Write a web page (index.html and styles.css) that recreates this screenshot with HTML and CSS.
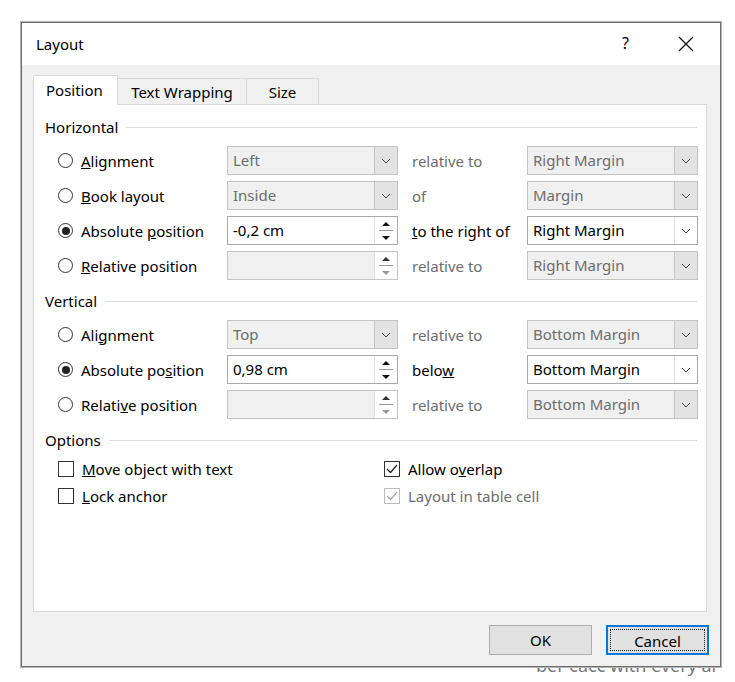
FILE: index.html
```html
<!DOCTYPE html>
<html lang="en">
<head>
  <meta charset="UTF-8" />
  <title>Layout</title>
  <link rel="stylesheet" href="styles.css">
</head>
<body>
  <div class="dialog">
    <div class="titlebar">
      <span class="title">Layout</span>
      <span class="help">?</span>
      <svg class="close" width="16" height="16" viewBox="0 0 16 16"><path d="M1 1L15 15M15 1L1 15" stroke="#111" stroke-width="1.3" fill="none"/></svg>
    </div>

    <div class="body">
      <div class="tabs">
        <div class="tab active">Position</div>
        <div class="tab">Text Wrapping</div>
        <div class="tab">Size</div>
      </div>

      <div class="panel">
        <div class="section-head"><span>Horizontal</span></div>
        <div class="grid">
          <label class="opt"><span class="radio"></span><span><u>A</u>lignment</span></label>
          <div class="combo disabled"><span>Left</span><span class="drop"><svg width="10" height="6" viewBox="0 0 10 6"><path d="M1 1L5 5L9 1" stroke="#444" fill="none"/></svg></span></div>
          <span class="mid dim">relative to</span>
          <div class="combo disabled"><span>Right Margin</span><span class="drop"><svg width="10" height="6" viewBox="0 0 10 6"><path d="M1 1L5 5L9 1" stroke="#444" fill="none"/></svg></span></div>

          <label class="opt"><span class="radio"></span><span><u>B</u>ook layout</span></label>
          <div class="combo disabled"><span>Inside</span><span class="drop"><svg width="10" height="6" viewBox="0 0 10 6"><path d="M1 1L5 5L9 1" stroke="#444" fill="none"/></svg></span></div>
          <span class="mid dim">of</span>
          <div class="combo disabled"><span>Margin</span><span class="drop"><svg width="10" height="6" viewBox="0 0 10 6"><path d="M1 1L5 5L9 1" stroke="#444" fill="none"/></svg></span></div>

          <label class="opt"><span class="radio on"></span><span>Absolute <u>p</u>osition</span></label>
          <div class="spin"><span>-0,2 cm</span><span class="arrows"><i class="up"></i><i class="down"></i></span></div>
          <span class="mid"><u>t</u>o the right of</span>
          <div class="combo"><span>Right Margin</span><span class="drop"><svg width="10" height="6" viewBox="0 0 10 6"><path d="M1 1L5 5L9 1" stroke="#444" fill="none"/></svg></span></div>

          <label class="opt"><span class="radio"></span><span><u>R</u>elative position</span></label>
          <div class="spin disabled"><span></span><span class="arrows"><i class="up"></i><i class="down"></i></span></div>
          <span class="mid dim">relative to</span>
          <div class="combo disabled"><span>Right Margin</span><span class="drop"><svg width="10" height="6" viewBox="0 0 10 6"><path d="M1 1L5 5L9 1" stroke="#444" fill="none"/></svg></span></div>
        </div>

        <div class="section-head"><span>Vertical</span></div>
        <div class="grid">
          <label class="opt"><span class="radio"></span><span>Ali<u>g</u>nment</span></label>
          <div class="combo disabled"><span>Top</span><span class="drop"><svg width="10" height="6" viewBox="0 0 10 6"><path d="M1 1L5 5L9 1" stroke="#444" fill="none"/></svg></span></div>
          <span class="mid dim">relative to</span>
          <div class="combo disabled"><span>Bottom Margin</span><span class="drop"><svg width="10" height="6" viewBox="0 0 10 6"><path d="M1 1L5 5L9 1" stroke="#444" fill="none"/></svg></span></div>

          <label class="opt"><span class="radio on"></span><span>Absolute po<u>s</u>ition</span></label>
          <div class="spin"><span>0,98 cm</span><span class="arrows"><i class="up"></i><i class="down"></i></span></div>
          <span class="mid">belo<u>w</u></span>
          <div class="combo"><span>Bottom Margin</span><span class="drop"><svg width="10" height="6" viewBox="0 0 10 6"><path d="M1 1L5 5L9 1" stroke="#444" fill="none"/></svg></span></div>

          <label class="opt"><span class="radio"></span><span>Relati<u>v</u>e position</span></label>
          <div class="spin disabled"><span></span><span class="arrows"><i class="up"></i><i class="down"></i></span></div>
          <span class="mid dim">relative to</span>
          <div class="combo disabled"><span>Bottom Margin</span><span class="drop"><svg width="10" height="6" viewBox="0 0 10 6"><path d="M1 1L5 5L9 1" stroke="#444" fill="none"/></svg></span></div>
        </div>

        <div class="section-head"><span>Options</span></div>
        <div class="checks">
          <label class="chk"><span class="box"></span><span><u>M</u>ove object with text</span></label>
          <label class="chk"><span class="box"><svg width="14" height="14" viewBox="0 0 14 14"><path d="M2 7L5.5 10.5L12 3" stroke="#222" stroke-width="1.2" fill="none"/></svg></span><span>Allow o<u>v</u>erlap</span></label>
          <label class="chk"><span class="box"></span><span><u>L</u>ock anchor</span></label>
          <label class="chk dim"><span class="box"><svg width="14" height="14" viewBox="0 0 14 14"><path d="M2 7L5.5 10.5L12 3" stroke="#aaa" stroke-width="1.2" fill="none"/></svg></span><span>Layout in table cell</span></label>
        </div>
      </div>

      <div class="buttons">
        <button class="btn">OK</button>
        <button class="btn focus"><span>Cancel</span></button>
      </div>
    </div>
  </div>
  <div class="behind">ber cacc with every ar</div>
</body>
</html>
```

FILE: styles.css
```css
body {
  margin: 0;
  background: #fff;
  font-family: "Noto Sans", "Open Sans", sans-serif;
  font-size: 15px;
  color: #000;
}

.dialog {
  position: relative;
  z-index: 1;
  margin: 22px 0 0 21px;
  width: 698px;
  height: 643px;
  border: 1px solid #6e6e6e;
  box-shadow: 0 0 0 1px #b4b4b4;
  background: #f0f0f0;
}

.titlebar {
  height: 42px;
  background: #fff;
  display: flex;
  align-items: center;
  padding-left: 14px;
}

.title {
  font-size: 15px;
  flex: 1;
}

.help {
  font-size: 16px;
  margin-right: 49px;
  margin-top: -2px;
}

.close {
  margin-right: 26px;
}

.body {
  padding: 10px 13px 0 11px;
}

.tabs {
  display: flex;
  align-items: flex-end;
  height: 29px;
}

.tab {
  height: 26px;
  line-height: 26px;
  padding: 0 12px;
  border: 1px solid #d9d9d9;
  border-bottom: none;
  border-left: none;
  background: #f0f0f0;
  font-size: 15px;
  box-sizing: border-box;
}

.tab:nth-child(2) {
  width: 129px;
  padding: 0;
  text-align: center;
}

.tab:nth-child(3) {
  width: 72px;
  text-align: center;
}

.tab.active {
  height: 30px;
  line-height: 28px;
  width: 85px;
  background: #fff;
  border-left: 1px solid #d9d9d9;
  margin-bottom: -1px;
  position: relative;
  z-index: 1;
}

.panel {
  height: 508px;
  background: #fff;
  border: 1px solid #d9d9d9;
  padding: 12px 9px 0 11px;
  box-sizing: border-box;
}

.section-head {
  display: flex;
  align-items: center;
  height: 20px;
  font-size: 15px;
}

.section-head::after {
  content: "";
  flex: 1;
  height: 1px;
  background: #dcdcdc;
  margin-left: 8px;
}

.grid {
  display: grid;
  grid-template-columns: 169px 171px 129px 171px;
  grid-auto-rows: 29px;
  row-gap: 6px;
  margin: 9px 0 11px 13px;
  align-items: center;
}

.opt,
.chk {
  display: flex;
  align-items: center;
  gap: 8px;
}

.radio {
  width: 13px;
  height: 13px;
  border: 1px solid #333;
  border-radius: 50%;
  display: flex;
  align-items: center;
  justify-content: center;
}

.radio.on::after {
  content: "";
  width: 8px;
  height: 8px;
  border-radius: 50%;
  background: #222;
}

.mid {
  padding-left: 14px;
}

.dim {
  color: #6d6d6d;
}

.combo,
.spin {
  height: 29px;
  box-sizing: border-box;
  border: 1px solid #a8a8a8;
  background: #fff;
  display: flex;
  align-items: stretch;
}

.combo > span:first-child,
.spin > span:first-child {
  flex: 1;
  padding-left: 5px;
  line-height: 27px;
}

.drop {
  width: 22px;
  border-left: 1px solid #e0e0e0;
  display: flex;
  align-items: center;
  justify-content: center;
}

.combo.disabled {
  background: #f0f0f0;
  border-color: #c4c4c4;
  color: #6d6d6d;
}

.combo.disabled .drop {
  background: #e3e3e3;
  border: 1px solid #c4c4c4;
  margin: -1px -1px -1px 0;
}

.spin.disabled {
  background: #f0f0f0;
  border-color: #c4c4c4;
}

.arrows {
  width: 22px;
  display: flex;
  flex-direction: column;
  border-left: 1px solid #e0e0e0;
}

.spin.disabled .arrows {
  background: #fff;
}

.arrows i {
  flex: 1;
  display: flex;
  align-items: center;
  justify-content: center;
}

.arrows .up {
  border-bottom: 1px solid #9a9a9a;
  margin: 0 4px;
}

.arrows .up::after {
  content: "";
  border: 4px solid transparent;
  border-bottom: 4px solid #111;
  border-top: none;
}

.arrows .down::after {
  content: "";
  border: 4px solid transparent;
  border-top: 4px solid #111;
  border-bottom: none;
}

.spin.disabled .up::after {
  border-bottom-color: #333;
}

.spin.disabled .down::after {
  border-top-color: #9a9a9a;
}

.checks {
  display: grid;
  grid-template-columns: 326px 260px;
  grid-auto-rows: 20px;
  row-gap: 7px;
  margin: 9px 0 0 13px;
}

.box {
  width: 16px;
  height: 16px;
  box-sizing: border-box;
  border: 1px solid #333;
  display: flex;
  align-items: center;
  justify-content: center;
}

.chk.dim .box {
  border-color: #bcbcbc;
}

.buttons {
  display: flex;
  justify-content: flex-end;
  gap: 14px;
  margin-top: 13px;
  margin-right: -2px;
}

.btn {
  width: 103px;
  height: 30px;
  font-family: "Noto Sans", "Open Sans", sans-serif;
  font-size: 15px;
  background: #e1e1e1;
  border: 1px solid #adadad;
  padding: 0;
  color: #000;
}

.btn.focus {
  border: 2px solid #0078d7;
  padding: 2px;
}

.btn.focus span {
  display: block;
  height: 100%;
  border: 1px dotted #222;
  box-sizing: border-box;
  line-height: 22px;
}

.behind {
  margin: -14px 0 0 536px;
  color: #777;
  font-size: 18px;
  white-space: nowrap;
}
```
